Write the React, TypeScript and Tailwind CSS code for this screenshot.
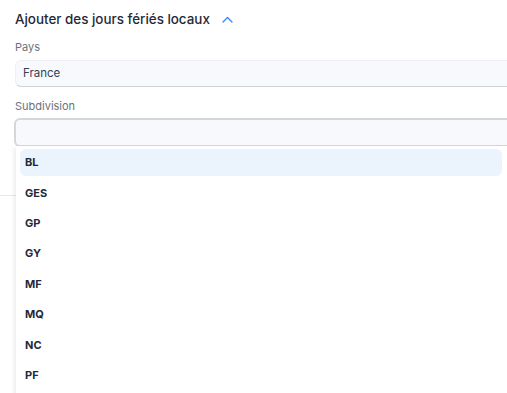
const subdivisions = ["BL", "GES", "GP", "GY", "MF", "MQ", "NC", "PF"];

function ChevronUp() {
  return (
    <svg width="11" height="7" viewBox="0 0 11 7" fill="none">
      <path d="M1 6L5.5 1.5L10 6" stroke="#3b82f6" strokeWidth="1.3" strokeLinecap="round" strokeLinejoin="round" />
    </svg>
  );
}

export default function App() {
  return (
    <div className="relative w-[507px] h-[393px] overflow-hidden bg-white font-['Inter',sans-serif]">
      <div className="pl-[15px] pt-[9px]">
        <div className="flex items-center h-[20px] gap-[12px]">
          <h2 className="text-[13.4px] font-medium text-[#1f2937]">Ajouter des jours fériés locaux</h2>
          <ChevronUp />
        </div>
        <div className="mt-[11px] text-[11px] leading-[14px] text-[#6b7280]">Pays</div>
        <div className="mt-[6px] w-[500px] h-[27px] flex items-center pl-[7px] rounded-[6px] bg-[#f8f9fd] border border-[#eef0f3] border-b-[#cfd2d6] text-[11.5px] text-[#374151]">
          France
        </div>
        <div className="mt-[12px] text-[11px] leading-[14px] text-[#6b7280]">Subdivision</div>
        <div className="mt-[5px] -ml-[1px] w-[500px] h-[29px] rounded-[6px] bg-[#f8f9fd] border-2 border-[#d4d6da]" />
      </div>
      <div className="mt-[48px] h-px bg-[#e7e8eb]" />
      <div className="absolute left-[16px] top-[146px] w-[500px] h-[260px] bg-white shadow-[-2px_2px_4px_rgba(0,0,0,0.08)] pt-[3px] pl-[4px]">
        {subdivisions.map((s, i) => (
          <div
            key={s}
            className={`w-[482px] h-[27px] mb-[3.4px] flex items-center pl-[5px] rounded-[6px] text-[11px] font-bold text-[#1f2937] ${i === 0 ? "bg-[#ebf3fc]" : ""}`}
          >
            {s}
          </div>
        ))}
      </div>
    </div>
  );
}
